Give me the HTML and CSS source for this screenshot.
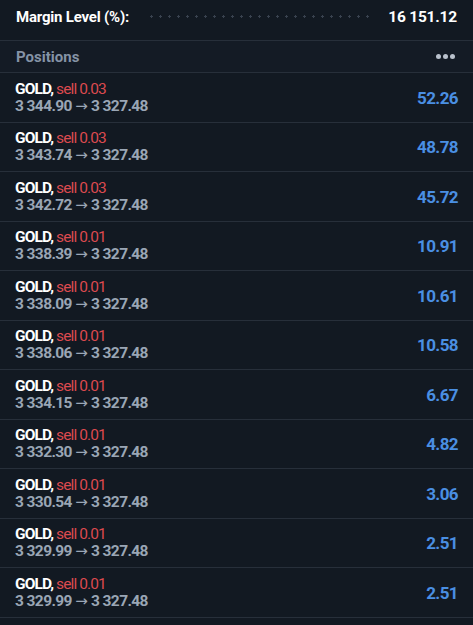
FILE: index.html
```html
<!DOCTYPE html>
<html>
<head>
<meta charset="utf-8">
<link rel="stylesheet" href="styles.css">
</head>
<body>
<div class="panel">
  <div class="margin-row">
    <span class="margin-label">Margin Level (%):</span>
    <span class="dots"></span>
    <span class="margin-value">16 151.12</span>
  </div>
  <div class="section-head">
    <span class="section-title">Positions</span>
    <span class="more"><i></i><i></i><i></i></span>
  </div>
  <div class="pos"><div class="info"><div class="l1"><b>GOLD,</b> <span class="sell">sell 0.03</span></div><div class="l2">3 344.90 <span class="arr">→</span> 3 327.48</div></div><div class="pl">52.26</div></div>
  <div class="pos"><div class="info"><div class="l1"><b>GOLD,</b> <span class="sell">sell 0.03</span></div><div class="l2">3 343.74 <span class="arr">→</span> 3 327.48</div></div><div class="pl">48.78</div></div>
  <div class="pos"><div class="info"><div class="l1"><b>GOLD,</b> <span class="sell">sell 0.03</span></div><div class="l2">3 342.72 <span class="arr">→</span> 3 327.48</div></div><div class="pl">45.72</div></div>
  <div class="pos"><div class="info"><div class="l1"><b>GOLD,</b> <span class="sell">sell 0.01</span></div><div class="l2">3 338.39 <span class="arr">→</span> 3 327.48</div></div><div class="pl">10.91</div></div>
  <div class="pos"><div class="info"><div class="l1"><b>GOLD,</b> <span class="sell">sell 0.01</span></div><div class="l2">3 338.09 <span class="arr">→</span> 3 327.48</div></div><div class="pl">10.61</div></div>
  <div class="pos"><div class="info"><div class="l1"><b>GOLD,</b> <span class="sell">sell 0.01</span></div><div class="l2">3 338.06 <span class="arr">→</span> 3 327.48</div></div><div class="pl">10.58</div></div>
  <div class="pos"><div class="info"><div class="l1"><b>GOLD,</b> <span class="sell">sell 0.01</span></div><div class="l2">3 334.15 <span class="arr">→</span> 3 327.48</div></div><div class="pl">6.67</div></div>
  <div class="pos"><div class="info"><div class="l1"><b>GOLD,</b> <span class="sell">sell 0.01</span></div><div class="l2">3 332.30 <span class="arr">→</span> 3 327.48</div></div><div class="pl">4.82</div></div>
  <div class="pos"><div class="info"><div class="l1"><b>GOLD,</b> <span class="sell">sell 0.01</span></div><div class="l2">3 330.54 <span class="arr">→</span> 3 327.48</div></div><div class="pl">3.06</div></div>
  <div class="pos"><div class="info"><div class="l1"><b>GOLD,</b> <span class="sell">sell 0.01</span></div><div class="l2">3 329.99 <span class="arr">→</span> 3 327.48</div></div><div class="pl">2.51</div></div>
  <div class="pos"><div class="info"><div class="l1"><b>GOLD,</b> <span class="sell">sell 0.01</span></div><div class="l2">3 329.99 <span class="arr">→</span> 3 327.48</div></div><div class="pl">2.51</div></div>
</div>
</body>
</html>
```

FILE: styles.css
```css
html, body {
  margin: 0;
  padding: 0;
  background: #121922;
}
body {
  font-family: Roboto, "Liberation Sans", sans-serif;
  color: #ffffff;
  width: 473px;
  height: 625px;
  overflow: hidden;
}
.panel {
  display: flex;
  flex-direction: column;
}
.margin-row {
  box-sizing: border-box;
  height: 41px;
  display: flex;
  align-items: center;
  padding: 0 16px 7px 16px;
  border-bottom: 1px solid #272f3a;
}
.margin-label {
  font-weight: 700;
  font-size: 15px;
  letter-spacing: -0.2px;
}
.dots {
  flex: 1;
  height: 3px;
  margin: 0 18px 0 18px;
  background-image: radial-gradient(circle, #39424f 1.1px, transparent 1.4px);
  background-size: 9px 3px;
  background-repeat: repeat-x;
}
.margin-value {
  font-weight: 700;
  font-size: 15.5px;
  letter-spacing: -0.2px;
}
.section-head {
  box-sizing: border-box;
  height: 32px;
  display: flex;
  align-items: center;
  justify-content: space-between;
  padding: 0 18px 0 16px;
  border-bottom: 1px solid #272f3a;
  background: #141b25;
}
.section-title {
  font-weight: 700;
  font-size: 15px;
  color: #8593a6;
}
.more {
  display: flex;
  gap: 2px;
}
.more i {
  width: 5px;
  height: 5px;
  border-radius: 50%;
  background: #b9c1cc;
}
.pos {
  box-sizing: border-box;
  height: 49.5px;
  display: flex;
  align-items: center;
  justify-content: space-between;
  padding: 1px 15px 0 15px;
  border-bottom: 1px solid #272f3a;
}
.info {
  display: flex;
  flex-direction: column;
}
.l1, .l2 {
  font-size: 15.5px;
  line-height: 17px;
  letter-spacing: -0.6px;
}
.l1 {
  letter-spacing: -0.9px;
}
.l1 b {
  font-weight: 700;
  color: #ffffff;
}
.sell {
  color: #dc4a4f;
}
.l2 {
  color: #9aa6b5;
  font-weight: 700;
}
.arr {
  font-family: "DejaVu Sans", sans-serif;
  font-weight: 400;
  font-size: 15px;
  letter-spacing: 0;
}
.pl {
  font-size: 17px;
  font-weight: 700;
  color: #4a8fe3;
  letter-spacing: -0.6px;
}
```
